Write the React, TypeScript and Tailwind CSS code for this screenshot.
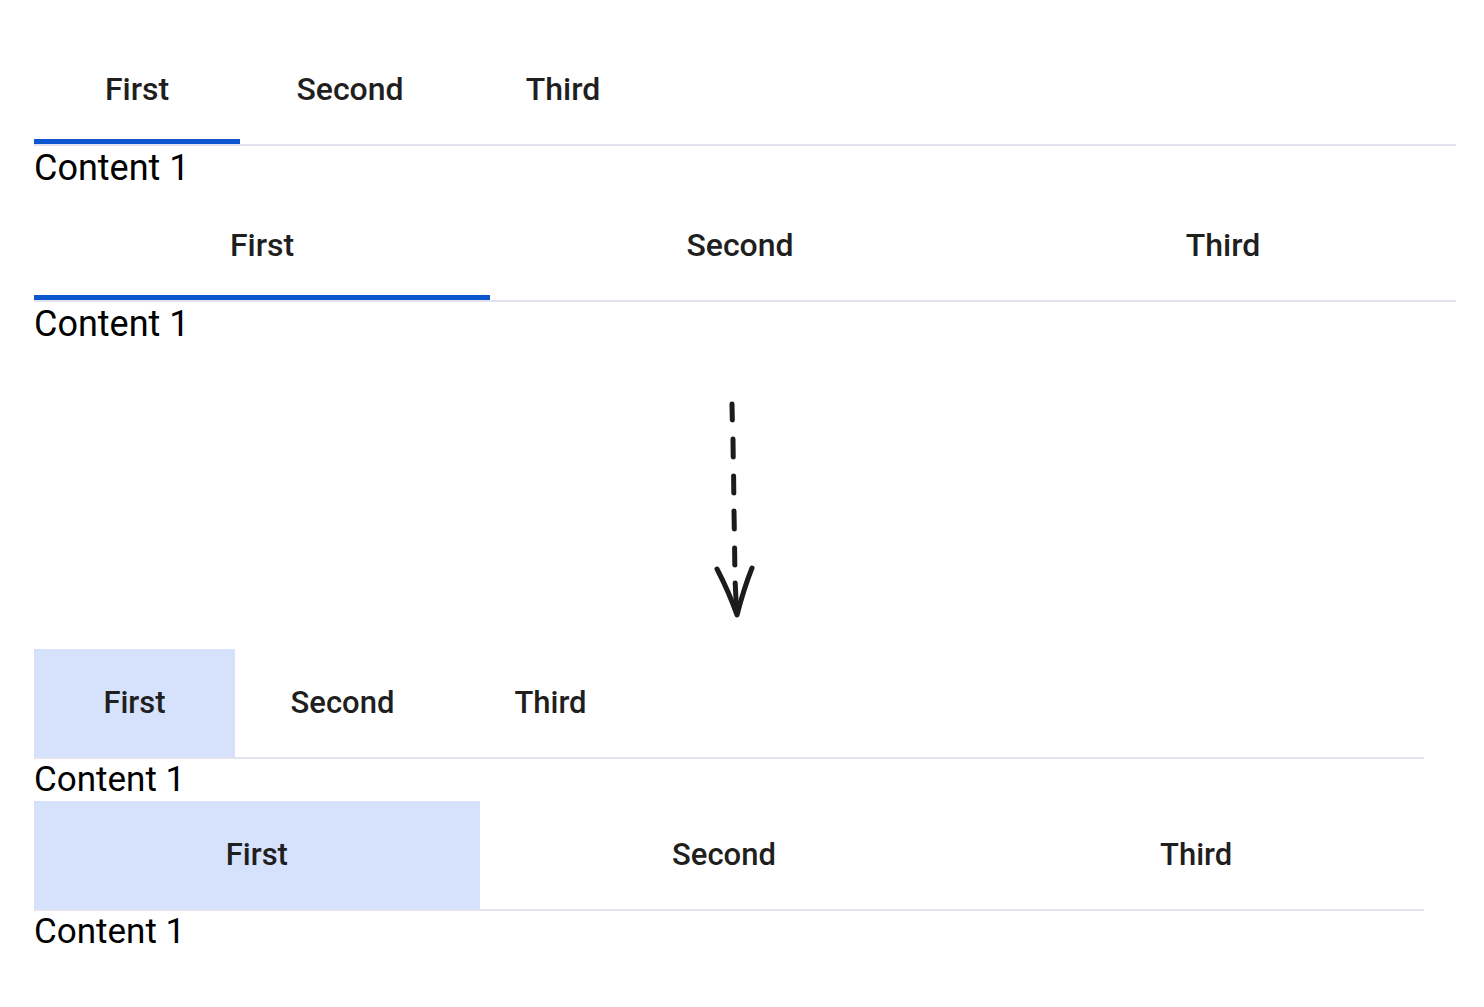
import React from "react";

const labels = ["First", "Second", "Third"];

// Underlined tabs, top half. `fill` spreads the tabs over the whole row.
const UnderlineTabs: React.FC<{ fill?: boolean }> = ({ fill }) => {
  const widths = fill
    ? ["grow basis-[176px]", "grow basis-[220px]", "grow basis-[186px]"]
    : ["w-[206px]", "w-[220px]", "w-[206px]"];
  return (
    <div className="w-[1422px]">
      <div className="flex border-b-2 border-[#e2e3ef]">
        {labels.map((label, i) => (
          <div
            key={label}
            className={`relative flex h-[110px] shrink-0 items-center justify-center text-[32px] font-medium text-[#1f1f1f] ${widths[i]}`}
          >
            {label}
            {i === 0 && (
              <span className="absolute inset-x-0 bottom-0 h-[5px] bg-[#0b57d0]" />
            )}
          </div>
        ))}
      </div>
      <div className="text-[36px] leading-[44px] text-black">Content 1</div>
    </div>
  );
};

// Filled tabs, bottom half: the selected tab gets a tinted background.
const FilledTabs: React.FC<{ fill?: boolean }> = ({ fill }) => {
  const widths = fill
    ? ["grow basis-[172px]", "grow basis-[215px]", "grow basis-[182px]"]
    : ["w-[201px]", "w-[215px]", "w-[201px]"];
  return (
    <div className="w-[1390px]">
      <div className="flex border-b-2 border-[#e2e3ef]">
        {labels.map((label, i) => (
          <div
            key={label}
            className={`flex h-[108px] shrink-0 items-center justify-center text-[31px] font-medium text-[#1f1f1f] ${widths[i]} ${
              i === 0 ? "bg-[#d6e2fc]" : ""
            }`}
          >
            {label}
          </div>
        ))}
      </div>
      <div className="text-[35px] leading-[42px] text-black">Content 1</div>
    </div>
  );
};

const Arrow = () => (
  <svg width="70" height="250" viewBox="0 0 70 250" fill="none">
    <g stroke="#1c1c1c" strokeWidth="5" strokeLinecap="round">
      <path d="M32 24 L32.3 40" />
      <path d="M33 59 L33.2 77" />
      <path d="M33.6 96 L33.8 113" />
      <path d="M34 131 L34.3 149" />
      <path d="M34.6 168 L34.8 185" />
      <path d="M35.2 203 L36.6 232" />
      <path d="M17 189 Q29 212 37 235 Q44 208 52 188" strokeLinejoin="round" />
    </g>
  </svg>
);

export default function App() {
  return (
    <div className="min-h-screen bg-white px-[34px] pt-[34px] font-['Roboto',sans-serif]">
      <UnderlineTabs />
      <UnderlineTabs fill />
      <div className="h-[303px] pl-[666px] pt-[34px]">
        <Arrow />
      </div>
      <FilledTabs />
      <FilledTabs fill />
    </div>
  );
}
